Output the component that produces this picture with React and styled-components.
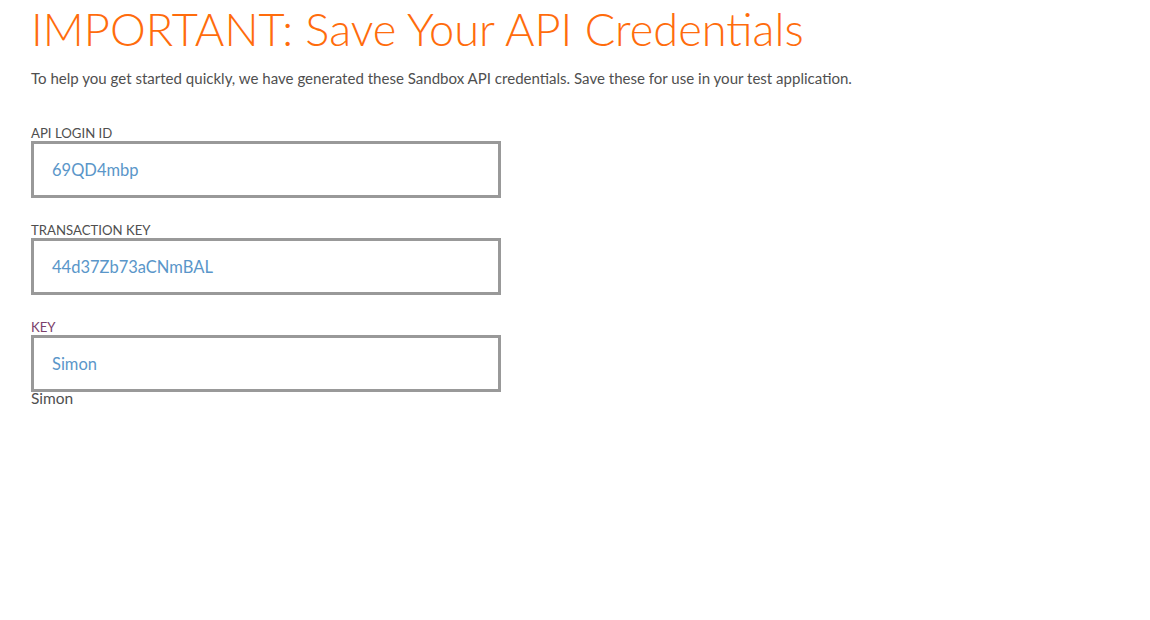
import styled, { createGlobalStyle } from "styled-components";

const GlobalStyle = createGlobalStyle`
  body {
    margin: 0;
    background: #fff;
    font-family: "Lato", "Open Sans", sans-serif;
  }
`

const fields = [
    { label: "API LOGIN ID", value: "69QD4mbp" },
    { label: "TRANSACTION KEY", value: "44d37Zb73aCNmBAL" },
    { label: "KEY", value: "Simon", accent: true, echo: "Simon" },
]

const App = () => {
    return(
        <Page>
            <GlobalStyle />
            <Title>IMPORTANT: Save Your API Credentials</Title>
            <Intro>To help you get started quickly, we have generated these Sandbox API credentials. Save these for use in your test application.</Intro>

            <Form>
                {fields.map((f) => (
                    <Field key={f.label}>
                        <Label $accent={f.accent}>{f.label}</Label>
                        <ValueBox>{f.value}</ValueBox>
                        {f.echo && <Echo>{f.echo}</Echo>}
                    </Field>
                ))}
            </Form>
        </Page>
    )
}

export default App

const Page = styled.div`
    padding: 0 31px;
`

const Title = styled.h1`
    margin: 0;
    padding-top: 4px;
    font-size: 45.2px;
    font-weight: 300;
    line-height: 50px;
    color: #ff6c0c;
`

const Intro = styled.p`
    margin: 14px 0 0;
    font-size: 15.05px;
    line-height: 20px;
    color: #4f4f4f;
`

const Form = styled.div`
    margin-top: 37px;
    display: flex;
    flex-direction: column;
    gap: 24px;
`

const Field = styled.div`
    display: flex;
    flex-direction: column;
`

const Label = styled.div`
    font-size: 13.2px;
    line-height: 16px;
    color: ${(p) => (p.$accent ? "#7b3f6b" : "#4f4f4f")};
`

const ValueBox = styled.div`
    box-sizing: border-box;
    width: 470px;
    height: 57px;
    border: 3px solid #999;
    padding: 0 18px;
    display: flex;
    align-items: center;
    font-size: 16.5px;
    color: #5a96c9;
`

const Echo = styled.div`
    font-size: 15.5px;
    line-height: 12px;
    color: #4f4f4f;
`
